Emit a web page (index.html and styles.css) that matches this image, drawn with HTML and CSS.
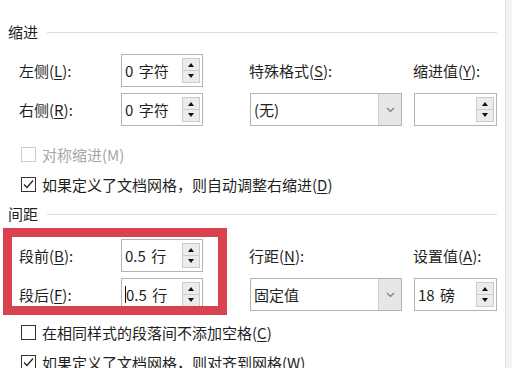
FILE: index.html
```html
<!DOCTYPE html>
<html lang="zh-CN">
<head>
    <meta charset="UTF-8">
    <meta name="viewport" content="width=device-width, initial-scale=1.0">
    <title>段落</title>
    <link rel="stylesheet" href="styles.css">
</head>
<body>
    <div class="dialog">
        <div class="panel">
            <div class="group-title"><span>缩进</span><i></i></div>
            <div class="field-grid indent">
                <label class="lbl c1">左侧(<u>L</u>):</label>
                <div class="spin c2"><span class="val">0 字符</span><div class="arrows"><b class="up"></b><b class="down"></b></div></div>
                <label class="lbl c4">特殊格式(<u>S</u>):</label>
                <label class="lbl c6">缩进值(<u>Y</u>):</label>
                <label class="lbl c1">右侧(<u>R</u>):</label>
                <div class="spin c2"><span class="val">0 字符</span><div class="arrows"><b class="up"></b><b class="down"></b></div></div>
                <div class="combo c4"><span class="val">(无)</span><b class="drop"><svg width="9" height="6" viewBox="0 0 9 6"><polyline points="1,1 4.5,4.5 8,1" fill="none" stroke="#7a7a7a" stroke-width="1.1"/></svg></b></div>
                <div class="spin c6"><span class="val"></span><div class="arrows"><b class="up"></b><b class="down"></b></div></div>
            </div>
            <div class="check first disabled"><span class="box"></span><span>对称缩进(M)</span></div>
            <div class="check"><span class="box"><svg width="13" height="13" viewBox="0 0 13 13"><polyline points="2,6.5 5,9.5 11,2.5" fill="none" stroke="#222" stroke-width="1.3"/></svg></span><span>如果定义了文档网格，则自动调整右缩进(<u>D</u>)</span></div>

            <div class="group-title second"><span>间距</span><i></i></div>
            <div class="spacing">
                <div class="field-grid">
                    <label class="lbl c1">段前(<u>B</u>):</label>
                    <div class="spin c2"><span class="val">0.5 行</span><div class="arrows"><b class="up"></b><b class="down"></b></div></div>
                    <label class="lbl c4">行距(<u>N</u>):</label>
                    <label class="lbl c6">设置值(<u>A</u>):</label>
                    <label class="lbl c1">段后(<u>F</u>):</label>
                    <div class="spin c2"><span class="val"><span class="caret"></span>0.5 行</span><div class="arrows"><b class="up"></b><b class="down"></b></div></div>
                    <div class="combo c4"><span class="val">固定值</span><b class="drop"><svg width="9" height="6" viewBox="0 0 9 6"><polyline points="1,1 4.5,4.5 8,1" fill="none" stroke="#7a7a7a" stroke-width="1.1"/></svg></b></div>
                    <div class="spin c6"><span class="val">18 磅</span><div class="arrows"><b class="up"></b><b class="down"></b></div></div>
                </div>
                <div class="highlight"></div>
            </div>
            <div class="check first-after"><span class="box"></span><span>在相同样式的段落间不添加空格(<u>C</u>)</span></div>
            <div class="check"><span class="box"><svg width="13" height="13" viewBox="0 0 13 13"><polyline points="2,6.5 5,9.5 11,2.5" fill="none" stroke="#222" stroke-width="1.3"/></svg></span><span>如果定义了文档网格，则对齐到网格(<u>W</u>)</span></div>
        </div>
        <div class="scroll"></div>
    </div>
</body>
</html>
```

FILE: styles.css
```css
body {
    margin: 0;
    padding: 0;
    background: #ffffff;
    color: #1f1f1f;
    font-family: "Noto Sans CJK SC", "Noto Sans", sans-serif;
    font-size: 15px;
    overflow: hidden;
}
u {
    text-decoration-thickness: 1px;
    text-underline-offset: 2px;
}
.dialog {
    display: flex;
    width: 512px;
    height: 368px;
}
.panel {
    width: 489px;
    padding: 24px 8px 0 8px;
}
.scroll {
    flex: 1;
    background: #f2f2f2;
    border-left: 1px solid #dedede;
}
.group-title {
    display: flex;
    align-items: center;
    gap: 9px;
    height: 16px;
    line-height: 16px;
}
.group-title i {
    flex: 1;
    height: 1px;
    background: #dcdcdc;
}
.group-title.second {
    margin-top: 7px;
}
.field-grid {
    display: grid;
    grid-template-columns: 101px 82px 47px 152px 12px 83px;
    grid-template-rows: 33px 33px;
    row-gap: 6px;
    margin-left: 12px;
}
.field-grid.indent {
    margin-top: 14px;
}
.c1 { grid-column: 1; }
.c2 { grid-column: 2; }
.c4 { grid-column: 4; }
.c6 { grid-column: 6; }
.lbl {
    align-self: center;
    white-space: nowrap;
    margin-left: -1px;
}
.spin, .combo {
    display: flex;
    align-items: center;
    border: 1px solid #b4b4b4;
    background: #fff;
    box-sizing: border-box;
    height: 33px;
}
.spin .val, .combo .val {
    flex: 1;
    padding-left: 3px;
    white-space: pre;
    word-spacing: 2px;
    display: flex;
    align-items: center;
}
.arrows {
    display: flex;
    flex-direction: column;
    width: 18px;
    height: 25px;
    margin-right: 2px;
}
.arrows b {
    flex: 1;
    background: #ececec;
    border: 1px solid #cbcbcb;
    position: relative;
}
.arrows b + b {
    border-top: none;
}
.arrows b::after {
    content: "";
    position: absolute;
    left: 5px;
    top: 4px;
    border-left: 3.5px solid transparent;
    border-right: 3.5px solid transparent;
}
.arrows .up::after {
    border-bottom: 4px solid #111;
}
.arrows .down::after {
    top: 3px;
    border-top: 4px solid #111;
}
.combo .drop {
    width: 22px;
    align-self: stretch;
    background: #e6e6e6;
    border-left: 1px solid #cfcfcf;
    display: flex;
    align-items: center;
    justify-content: center;
}
.caret {
    display: inline-block;
    width: 0;
    height: 17px;
    border-left: 1px solid #111;
}
.check {
    display: flex;
    align-items: center;
    gap: 6px;
    height: 30px;
    padding-left: 13px;
    white-space: nowrap;
}
.check.first {
    margin-top: 13px;
}
.check.first-after {
    margin-top: 6px;
}
.check .box {
    width: 15px;
    height: 15px;
    box-sizing: border-box;
    border: 1px solid #333;
    display: flex;
    align-items: center;
    justify-content: center;
}
.check.disabled {
    color: #a6a6a6;
}
.check.disabled .box {
    border-color: #cccccc;
}
.spacing {
    position: relative;
    margin-top: 17px;
}
.highlight {
    position: absolute;
    left: -5px;
    top: -11px;
    width: 224px;
    height: 87px;
    box-sizing: border-box;
    border: 9px solid #d9434f;
    pointer-events: none;
}
```
